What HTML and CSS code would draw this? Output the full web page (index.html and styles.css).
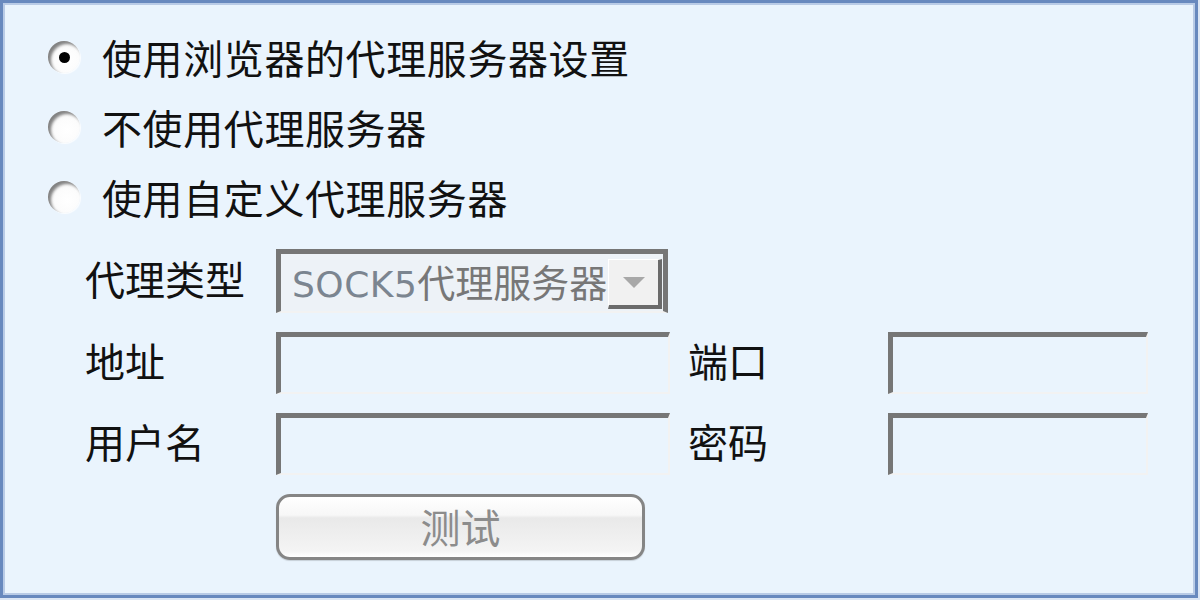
FILE: index.html
```html
<!DOCTYPE html>
<html lang="zh-CN">

<head>
    <meta charset="UTF-8">
    <title>代理服务器设置</title>
    <link rel="stylesheet" href="styles.css">
</head>

<body>
    <div class="panel">
        <div class="options">
            <label class="option">
                <span class="radio checked"></span>
                <span>使用浏览器的代理服务器设置</span>
            </label>
            <label class="option">
                <span class="radio"></span>
                <span>不使用代理服务器</span>
            </label>
            <label class="option">
                <span class="radio"></span>
                <span>使用自定义代理服务器</span>
            </label>
        </div>

        <div class="form">
            <span class="label">代理类型</span>
            <div class="select">
                <span class="select-text"><span class="latin">SOCK5</span>代理服务器</span>
                <span class="select-btn"><span class="arrow"></span></span>
            </div>
            <span></span>
            <span></span>

            <span class="label">地址</span>
            <div class="field wide"></div>
            <span class="label">端口</span>
            <div class="field short"></div>

            <span class="label">用户名</span>
            <div class="field wide"></div>
            <span class="label">密码</span>
            <div class="field short"></div>

            <span></span>
            <button class="btn" disabled>测试</button>
        </div>
    </div>
</body>

</html>
```

FILE: styles.css
```css
* {
    box-sizing: border-box;
}

body {
    margin: 0;
    font-family: "Noto Sans CJK SC", "Liberation Sans", sans-serif;
    color: #111;
    background-color: #dce6f4;
}

.panel {
    width: 1198px;
    height: 598px;
    background-color: #eaf4fd;
    border: 3px solid #6889be;
    box-shadow: inset 0 0 0 2px #b9cbe6;
    padding: 19px 0 0 0;
}

.options {
    display: flex;
    flex-direction: column;
}

.option {
    display: flex;
    align-items: center;
    height: 70px;
    padding-left: 45px;
    font-size: 40px;
    letter-spacing: 0.6px;
}

.radio {
    width: 32px;
    height: 32px;
    margin-right: 22px;
    border-radius: 50%;
    background: radial-gradient(circle at 60% 60%, #ffffff 0, #fbfbfb 55%, #eeeeee 100%);
    box-shadow: inset 3px 3px 3px rgba(90, 90, 90, 0.75), 1px 1px 1px rgba(255, 255, 255, 0.8);
    position: relative;
    flex-shrink: 0;
}

.radio.checked::after {
    content: "";
    position: absolute;
    left: 11px;
    top: 11px;
    width: 11px;
    height: 11px;
    border-radius: 50%;
    background-color: #000;
}

.form {
    display: grid;
    grid-template-columns: 270px 412px 200px 260px;
    grid-template-rows: 64px 62px 62px 66px;
    row-gap: 19px;
    margin-top: 17px;
    padding-left: 3px;
    align-items: center;
}

.label {
    padding-left: 79px;
    font-size: 40px;
    line-height: 1;
    margin-top: -6px;
}

.form .label:nth-child(7),
.form .label:nth-child(11) {
    padding-left: 0;
}

.field {
    height: 62px;
    border-style: solid;
    border-width: 5px 2px 2px 5px;
    border-color: #767676 #f2f2f2 #f2f2f2 #767676;
    background-color: #eaf4fd;
}

.field.wide {
    width: 394px;
}

.field.short {
    width: 260px;
}

.select {
    width: 392px;
    height: 64px;
    display: flex;
    align-items: center;
    border-style: solid;
    border-width: 5px 5px 2px 5px;
    border-color: #767676 #767676 #f2f2f2 #767676;
    background-color: #edf2f7;
    overflow: hidden;
}

.select-text {
    flex: 1;
    overflow: hidden;
    white-space: nowrap;
    padding-left: 11px;
    font-size: 38px;
    color: #777;
    margin-top: -4px;
}

.latin {
    font-family: "DejaVu Sans", sans-serif;
    font-size: 36px;
    letter-spacing: 0.5px;
    color: #7b8590;
}

.select-btn {
    width: 54px;
    height: 50px;
    margin-top: 2px;
    margin-right: 1px;
    background-color: #f1f1f1;
    border-style: solid;
    border-width: 1px 4px 4px 1px;
    border-color: #ffffff #6b6b6b #6b6b6b #ffffff;
    display: flex;
    align-items: center;
    justify-content: center;
    flex-shrink: 0;
}

.arrow {
    width: 0;
    height: 0;
    border-left: 11px solid transparent;
    border-right: 11px solid transparent;
    border-top: 11px solid #a8a8a8;
}

.btn {
    width: 369px;
    height: 66px;
    border: 3px solid #858585;
    border-radius: 14px;
    background: linear-gradient(#ffffff 0, #f7f7f7 30%, #e9e9e9 35%, #f4f4f4 90%, #ffffff 100%);
    font-family: "Noto Sans CJK SC", sans-serif;
    font-size: 40px;
    color: #8c8c8c;
    padding: 0 0 4px 0;
    box-shadow: 0 1px 1px rgba(0, 0, 0, 0.15);
}
```
